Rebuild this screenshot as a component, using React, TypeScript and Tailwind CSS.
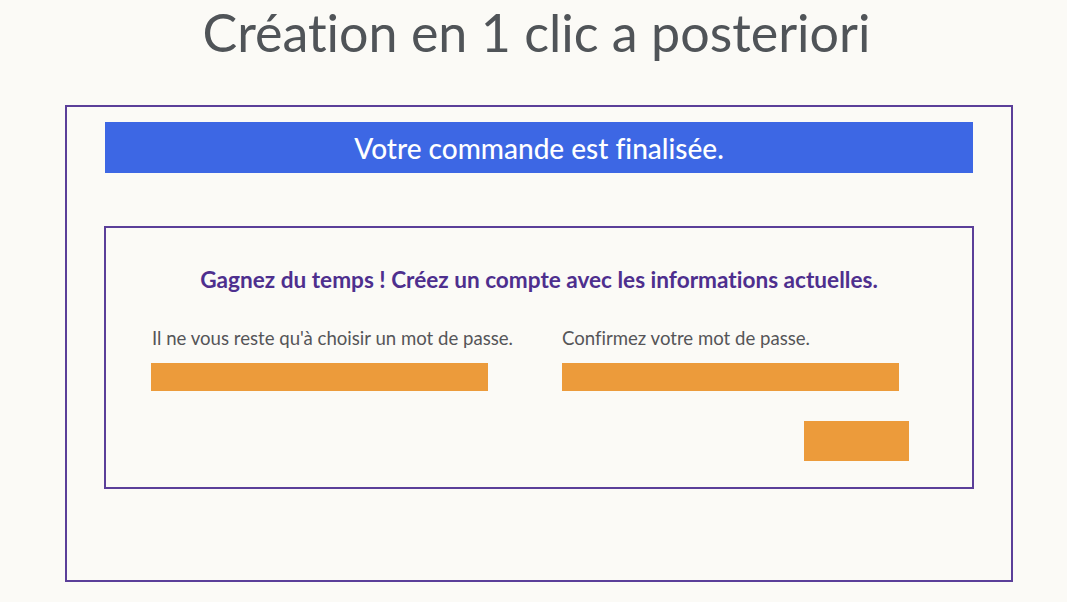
import React from "react";

export default function App() {
  return (
    <div className="w-[1067px] h-[602px] overflow-hidden bg-[#fbfaf6] [font-variant-ligatures:none]" style={{ fontFamily: "Lato, 'Noto Sans', sans-serif" }}>
      <div className="h-[105px] flex justify-center">
        <h1 className="text-[52px] leading-[64px] text-[#505458] font-normal pl-[6px]">
          Création en 1 clic a posteriori
        </h1>
      </div>
      <div className="ml-[65px] w-[948px] h-[477px] border-2 border-[#5b3f99] pt-[15px]">
        <div className="ml-[38px] w-[868px] h-[51px] bg-[#3d67e4] flex items-center justify-center">
          <span className="text-white text-[28px] font-medium leading-[34px]">Votre commande est finalisée.</span>
        </div>
        <div className="ml-[37px] mt-[53px] w-[870px] h-[263px] border-2 border-[#5b3f99] flex flex-col">
          <div className="mt-[38px] text-center text-[22.6px] font-bold text-[#4e2f8e] leading-[28px]">
            Gagnez du temps ! Créez un compte avec les informations actuelles.
          </div>
          <div className="mt-[32px] pl-[45px] flex gap-[74px]">
            <div className="flex flex-col w-[337px]">
              <span className="pl-[1px] text-[18.6px] leading-[24px] text-[#555558] whitespace-nowrap">Il ne vous reste qu'à choisir un mot de passe.</span>
              <div className="mt-[13px] h-[28px] bg-[#ec9b3b]" />
            </div>
            <div className="flex flex-col w-[337px]">
              <span className="text-[18.6px] leading-[24px] text-[#555558] whitespace-nowrap">Confirmez votre mot de passe.</span>
              <div className="mt-[13px] h-[28px] bg-[#ec9b3b]" />
            </div>
          </div>
          <div className="mt-[30px] pr-[63px] flex justify-end">
            <div className="w-[105px] h-[40px] bg-[#ec9b3b]" />
          </div>
        </div>
      </div>
    </div>
  );
}
